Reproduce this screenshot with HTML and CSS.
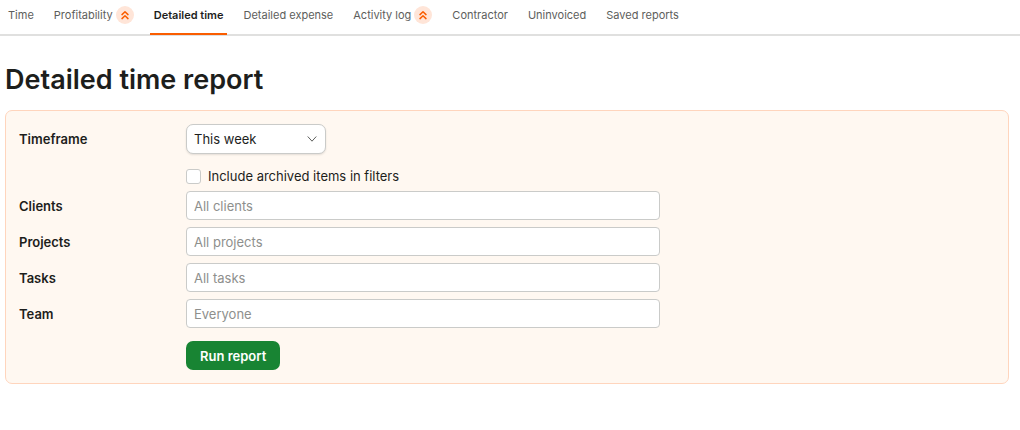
FILE: index.html
```html
<!DOCTYPE html>
<html lang="en">
<head>
  <meta charset="UTF-8" />
  <meta name="viewport" content="width=device-width, initial-scale=1" />
  <title>Detailed time report</title>
  <link rel="stylesheet" href="styles.css">
</head>
<body>
  <nav class="tabs">
    <a class="tab" href="#">Time</a>
    <a class="tab" href="#">Profitability
      <span class="badge"><svg width="10" height="10" viewBox="0 0 10 10"><path d="M2 4.600 5 1.700l3 2.900M2 8.600 5 5.700l3 2.900" /></svg></span>
    </a>
    <a class="tab active" href="#">Detailed time</a>
    <a class="tab" href="#">Detailed expense</a>
    <a class="tab" href="#">Activity log
      <span class="badge"><svg width="10" height="10" viewBox="0 0 10 10"><path d="M2 4.600 5 1.700l3 2.900M2 8.600 5 5.700l3 2.900" /></svg></span>
    </a>
    <a class="tab" href="#">Contractor</a>
    <a class="tab" href="#">Uninvoiced</a>
    <a class="tab" href="#">Saved reports</a>
  </nav>

  <main>
    <h1>Detailed time report</h1>

    <form class="filters">
      <div class="row timeframe">
        <label for="timeframe">Timeframe</label>
        <div class="select">
          <select id="timeframe">
            <option>This week</option>
          </select>
          <svg class="chevron" width="10" height="6" viewBox="0 0 10 6"><path d="M1 .8 5 5.200 9 .8" /></svg>
        </div>
      </div>

      <div class="archived">
        <input type="checkbox" id="archived">
        <label for="archived">Include archived items in filters</label>
      </div>

      <div class="row">
        <label for="clients">Clients</label>
        <input type="text" id="clients" placeholder="All clients">
      </div>
      <div class="row">
        <label for="projects">Projects</label>
        <input type="text" id="projects" placeholder="All projects">
      </div>
      <div class="row">
        <label for="tasks">Tasks</label>
        <input type="text" id="tasks" placeholder="All tasks">
      </div>
      <div class="row">
        <label for="team">Team</label>
        <input type="text" id="team" placeholder="Everyone">
      </div>

      <button type="submit">Run report</button>
    </form>
  </main>
</body>
</html>
```
FILE: styles.css
```css
* {
  box-sizing: border-box;
}
body {
  margin: 0;
  background: #fff;
  color: #1d1e1c;
  font-family: Inter, "Liberation Sans", sans-serif;
  font-size: 13px;
}
svg {
  fill: none;
  stroke-linecap: round;
  stroke-linejoin: round;
}
.tabs {
  display: flex;
  gap: 12px;
  height: 36px;
  padding: 0 4px;
  border-bottom: 2px solid #e0e0df;
}
.tab {
  display: flex;
  align-items: center;
  gap: 3px;
  height: 35px;
  padding: 0 4px 3px;
  border-bottom: 2px solid transparent;
  color: #5d5e5c;
  font-size: 11px;
  text-decoration: none;
  white-space: nowrap;
}
.tab.active {
  border-color: #fa5d00;
  color: #1d1e1c;
  font-weight: 600;
}
.badge {
  display: flex;
  align-items: center;
  justify-content: center;
  width: 18px;
  height: 18px;
  border-radius: 50%;
  background: #ffe5d8;
}
.badge svg {
  stroke: #fa5d00;
  stroke-width: 1.5;
}
main {
  padding: 26px 11px 0 5px;
}
h1 {
  margin: 0 0 12px;
  font-size: 27px;
  font-weight: 600;
  line-height: 36px;
}
.filters {
  padding: 13px;
  border: 1px solid #ffd5bd;
  border-radius: 7px;
  background: #fff8f1;
}
.row {
  display: grid;
  grid-template-columns: 167px minmax(0, 474px);
  align-items: center;
  margin-bottom: 7px;
}
.row label {
  font-weight: 600;
}
.row.timeframe {
  margin-bottom: 14px;
}
.select {
  display: grid;
  align-items: center;
  width: 140px;
}
.select select,
.chevron {
  grid-area: 1 / 1;
}
.chevron {
  justify-self: end;
  margin-right: 9px;
  stroke: #5d5e5c;
  pointer-events: none;
}
select,
input[type="text"] {
  width: 100%;
  height: 29px;
  padding: 0 7px;
  border: 1px solid #cacbc9;
  border-radius: 4px;
  background: #fff;
  color: #1d1e1c;
  font: inherit;
}
select {
  appearance: none;
  height: 30px;
  border-radius: 7px;
  box-shadow: 0 1px 2px rgba(29, 30, 28, 0.12);
}
input::placeholder {
  color: #8e8f8d;
}
.archived {
  display: flex;
  align-items: center;
  gap: 7px;
  margin: 0 0 7px 167px;
}
input[type="checkbox"] {
  appearance: none;
  width: 15px;
  height: 15px;
  margin: 0;
  border: 1px solid #cacbc9;
  border-radius: 3px;
  background: #fff;
}
button {
  display: block;
  height: 29px;
  margin: 13px 0 0 167px;
  padding: 0 14px;
  border: 0;
  border-radius: 7px;
  background: #188433;
  color: #fff;
  font: inherit;
  font-weight: 600;
}
```
